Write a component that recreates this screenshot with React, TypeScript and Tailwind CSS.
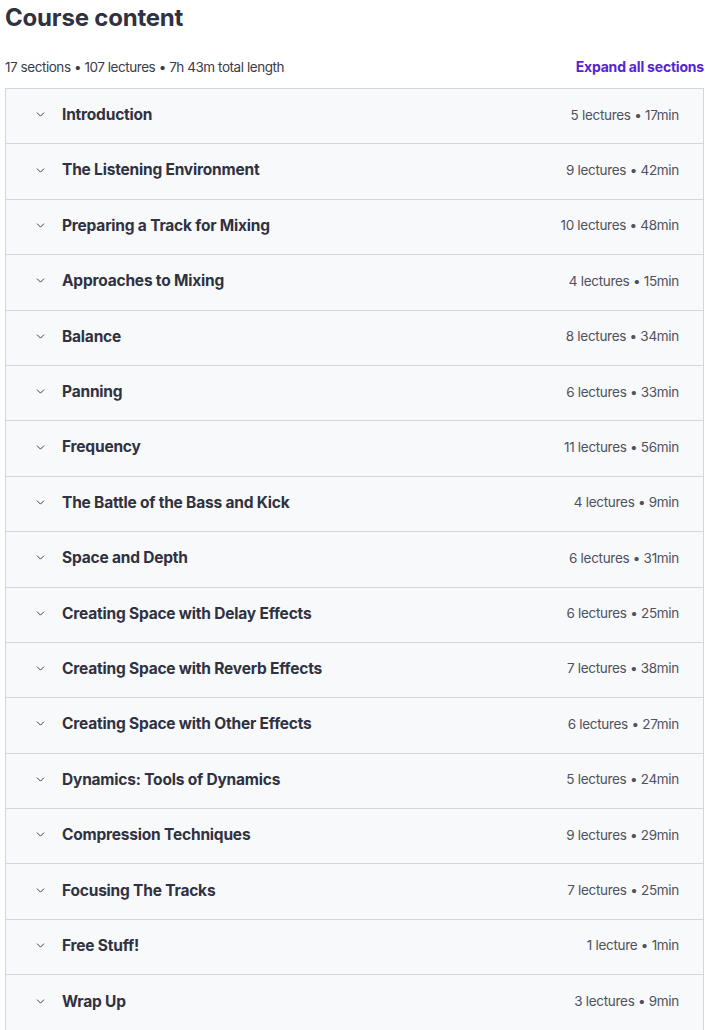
import { ChevronDown } from 'lucide-react'

const sections: [string, string][] = [
  ['Introduction', '5 lectures • 17min'],
  ['The Listening Environment', '9 lectures • 42min'],
  ['Preparing a Track for Mixing', '10 lectures • 48min'],
  ['Approaches to Mixing', '4 lectures • 15min'],
  ['Balance', '8 lectures • 34min'],
  ['Panning', '6 lectures • 33min'],
  ['Frequency', '11 lectures • 56min'],
  ['The Battle of the Bass and Kick', '4 lectures • 9min'],
  ['Space and Depth', '6 lectures • 31min'],
  ['Creating Space with Delay Effects', '6 lectures • 25min'],
  ['Creating Space with Reverb Effects', '7 lectures • 38min'],
  ['Creating Space with Other Effects', '6 lectures • 27min'],
  ['Dynamics: Tools of Dynamics', '5 lectures • 24min'],
  ['Compression Techniques', '9 lectures • 29min'],
  ['Focusing The Tracks', '7 lectures • 25min'],
  ['Free Stuff!', '1 lecture • 1min'],
  ['Wrap Up', '3 lectures • 9min'],
]

export default function App() {
  return (
    <div className="bg-white pl-[5px] pr-px text-[#303141] font-['Inter',sans-serif]">
      <h2 className="pt-[3px] text-[24px] font-bold leading-[30px] tracking-[-0.2px]">Course content</h2>
      <div className="mt-[24px] flex items-center justify-between pb-[11px] text-[14px] leading-[20px]">
        <span className="text-[13.5px] tracking-[-0.45px] text-[#3a3c4a]">17 sections • 107 lectures • 7h 43m total length</span>
        <button className="font-bold text-[#5624d0] tracking-[-0.2px]">Expand all sections</button>
      </div>
      <div className="border border-[#d1d7dc]">
        {sections.map(([title, meta], i) => (
          <div
            key={title}
            className={`flex h-[55.4px] items-center bg-[#f7f9fa] pb-[3px] pl-[28px] pr-[24px] ${i < sections.length - 1 ? 'border-b border-[#d1d7dc]' : ''}`}
          >
            <ChevronDown className="h-[13px] w-[13px] text-[#303141]" strokeWidth={1.7} />
            <span className="ml-[15px] flex-1 text-[15.5px] font-bold tracking-[-0.2px]">{title}</span>
            <span className="text-[13.5px] text-[#4f5160] tracking-[-0.3px]">{meta}</span>
          </div>
        ))}
      </div>
    </div>
  )
}
